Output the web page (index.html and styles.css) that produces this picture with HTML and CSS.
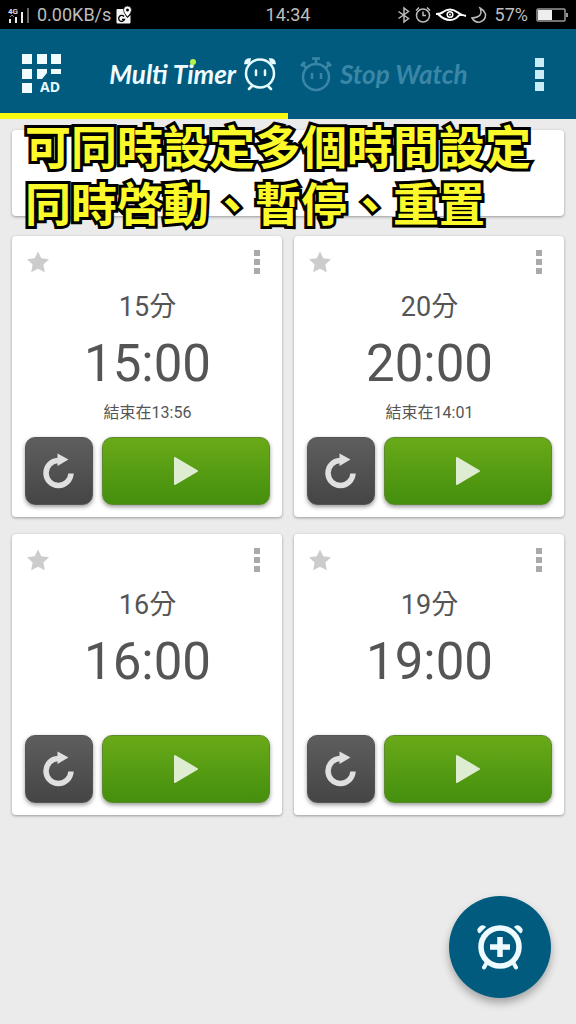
FILE: index.html
```html
<!DOCTYPE html>
<html lang="zh-Hant">
<head>
<meta charset="utf-8">
<meta name="viewport" content="width=device-width, initial-scale=1">
<title>Multi Timer</title>
<link rel="stylesheet" href="styles.css">
</head>
<body>
<svg class="defs" aria-hidden="true">
  <symbol id="star" viewBox="0 0 22 22"><path d="M11 0.500 L14.300 7.300 L22 8.200 L16.400 13.500 L17.800 21.300 L11 17.800 L4.200 21.300 L5.600 13.500 L0 8.200 L7.700 7.300 Z"/></symbol>
  <symbol id="dots" viewBox="0 0 6 24"><path d="M0 0h6v6H0zM0 9h6v6H0zM0 18h6v6H0z"/></symbol>
  <symbol id="reset" viewBox="0 0 32 36"><path d="M28 20.500 A12.500 12.500 0 1 1 15 7.500" fill="none" stroke="#e0e0e0" stroke-width="5.500"/><path d="M14.500 0.500 L25.500 6.500 L14.500 13 Z" fill="#e0e0e0"/></symbol>
  <symbol id="play" viewBox="0 0 26 30"><path d="M2 2 L24 15 L2 28 Z" fill="#deecd2" stroke="#deecd2" stroke-width="2" stroke-linejoin="round"/></symbol>
</svg>

<div class="status">
  <div class="status-side">
    <svg class="signal" viewBox="0 0 22 18" width="22" height="18"><text x="0" y="8" class="signal-text">4G</text><path d="M1 13h2v4H1zM7 11h2v6H7zM13 6h2v11h-2z" fill="#eee"/><path d="M2 11l2-2 2 2" stroke="#888" fill="none"/><path d="M19 2h2v15h-2z" fill="#666"/></svg>
    <span class="rate">0.00KB/s</span>
    <svg viewBox="0 0 16 18" width="16" height="18"><path d="M1.500 3H8q-.5 5 3.500 9l3-3v7.500q0 1-1 1h-12q-1 0-1-1V4q0-1 1-1z" fill="#f4f4f4"/><path d="M11.500 0a4 4 0 0 1 4 4q0 3-4 7-4-4-4-7a4 4 0 0 1 4-4z" fill="#fff" stroke="#000" stroke-width=".7"/><circle cx="11.500" cy="4" r="1.500"/><path d="M8 10.500a3 3 0 1 0 .5 3H6" fill="none" stroke="#000" stroke-width="1.300"/></svg>
  </div>
  <time class="clock">14:34</time>
  <div class="status-side status-right">
    <svg viewBox="0 0 14 18" width="14" height="18" class="line"><path d="M1.500 5.500l10 7L7 16V2l4.500 3.500-10 7"/></svg>
    <svg viewBox="0 0 16 18" width="16" height="18" class="line"><circle cx="8" cy="9.500" r="6.500"/><path d="M8 5.500v4h3M1 4.500l3-3M15 4.500l-3-3"/></svg>
    <svg viewBox="0 0 32 16" width="32" height="16"><path d="M1 7q5 0 7-2 7-5 14 0 4 3 9 4M3 7q6 6 12 6t10-6" fill="none" stroke="#fff" stroke-width="2"/><circle cx="15" cy="7.500" r="2.800" fill="none" stroke="#fff" stroke-width="1.500"/><circle cx="15" cy="7.500" r="1" fill="#fff"/></svg>
    <svg viewBox="0 0 16 18" width="16" height="18" class="line"><path d="M9 2q4 9-8 10 3 5 8 4 6-2 5.500-8Q13 4 9 2z"/></svg>
    <span class="percent">57%</span>
    <svg viewBox="0 0 32 14" width="32" height="14"><rect x="1" y="1" width="28" height="12" rx="1" fill="none" stroke="#999" stroke-width="1.500"/><path d="M2 2h14v10H2z" fill="#eee"/><path d="M30 5h2v4h-2z" fill="#999"/></svg>
  </div>
</div>

<header class="header">
  <div class="half active">
    <button class="plain" aria-label="AD">
      <svg viewBox="0 0 42 42" width="42" height="42"><path d="M0 1h10v10H0zM15 1h10v10H15zM29 1h10v10H29zM0 16h10v10H0zM15 16h10v4l-5 6h-5zM29 16h10v5H29zM0 30h10v10H0z" fill="#f0fbff"/><text x="18" y="39" class="ad-text">AD</text></svg>
    </button>
    <a href="#timer" class="tab tab-timer">
      <span class="logo">Multi T<span class="dot-i">i</span>mer</span>
      <svg viewBox="0 0 34 34" width="34" height="34" fill="none" stroke="#e6fbff" stroke-width="2.500" stroke-linecap="round"><circle cx="17" cy="16.500" r="14"/><path d="M13 13.500v4.500M22 13.500v4.500M9 29l-3 3M25 29l3 3"/><path d="M2.500 6q.5-3.500 4-3.500L6 4.500 4.500 6zM31.500 6q-.5-3.500-4-3.500l.5 2L29.500 6z" fill="#e6fbff"/></svg>
    </a>
  </div>
  <div class="half">
    <a href="#stopwatch" class="tab tab-watch">
      <svg viewBox="0 0 32 36" width="32" height="36" fill="none" stroke="#3b86a6" stroke-width="2.500"><circle cx="16" cy="21" r="13"/><path d="M12 17v6M21 17v6M16 8V3M12 2.500h8M6 12L2.500 7.500M26 12l3.500-4.500"/><path d="M1 10l4-4M31 10l-4-4" stroke-width="3"/></svg>
      <span class="logo">Stop Watch</span>
    </a>
    <button class="plain" aria-label="Menu"><svg viewBox="0 0 9 33" width="9" height="33"><path d="M0 0h9v9H0zM0 12h9v9H0zM0 24h9v9H0z" fill="#c9ecf7"/></svg></button>
  </div>
</header>

<main class="main">
  <section class="banner">
    <p class="caption"><span class="caption-line">可同時設定多個時間設定</span><span class="caption-line">同時啓動、暫停、重置</span></p>
  </section>
  <section class="timers">
    <article class="card">
      <div class="card-top"><button class="plain" aria-label="Favorite"><svg class="star"><use href="#star"/></svg></button><button class="plain" aria-label="Options"><svg class="dots"><use href="#dots"/></svg></button></div>
      <h2 class="name">15分</h2><p class="time">15:00</p><p class="end">結束在13:56</p>
      <div class="actions"><button class="btn reset" aria-label="Reset"><svg class="reset-icon"><use href="#reset"/></svg></button><button class="btn play" aria-label="Start"><svg class="play-icon"><use href="#play"/></svg></button></div>
    </article>
    <article class="card">
      <div class="card-top"><button class="plain" aria-label="Favorite"><svg class="star"><use href="#star"/></svg></button><button class="plain" aria-label="Options"><svg class="dots"><use href="#dots"/></svg></button></div>
      <h2 class="name">20分</h2><p class="time">20:00</p><p class="end">結束在14:01</p>
      <div class="actions"><button class="btn reset" aria-label="Reset"><svg class="reset-icon"><use href="#reset"/></svg></button><button class="btn play" aria-label="Start"><svg class="play-icon"><use href="#play"/></svg></button></div>
    </article>
    <article class="card">
      <div class="card-top"><button class="plain" aria-label="Favorite"><svg class="star"><use href="#star"/></svg></button><button class="plain" aria-label="Options"><svg class="dots"><use href="#dots"/></svg></button></div>
      <h2 class="name">16分</h2><p class="time">16:00</p><p class="end"></p>
      <div class="actions"><button class="btn reset" aria-label="Reset"><svg class="reset-icon"><use href="#reset"/></svg></button><button class="btn play" aria-label="Start"><svg class="play-icon"><use href="#play"/></svg></button></div>
    </article>
    <article class="card">
      <div class="card-top"><button class="plain" aria-label="Favorite"><svg class="star"><use href="#star"/></svg></button><button class="plain" aria-label="Options"><svg class="dots"><use href="#dots"/></svg></button></div>
      <h2 class="name">19分</h2><p class="time">19:00</p><p class="end"></p>
      <div class="actions"><button class="btn reset" aria-label="Reset"><svg class="reset-icon"><use href="#reset"/></svg></button><button class="btn play" aria-label="Start"><svg class="play-icon"><use href="#play"/></svg></button></div>
    </article>
  </section>
</main>

<button class="fab" aria-label="Add timer">
  <svg viewBox="0 0 46 46" width="46" height="46" fill="none" stroke="#effcff"><circle cx="23" cy="23" r="19" stroke-width="5.500"/><path d="M23 13v20M13 23h20" stroke-width="5.500"/><path d="M9.500 39l-2.500 4.500M36.500 39l2.500 4.500" stroke-width="4" stroke-linecap="round"/><path d="M1.500 8.500Q0 6 1.500 4q2-3 6-2l1 1-6 6zM44.500 8.500Q46 6 44.500 4q-2-3-6-2l-1 1 6 6z" fill="#effcff" stroke-width="1"/></svg>
</button>
</body>
</html>
```
FILE: styles.css
```css
* { box-sizing: border-box; }
body {
  margin: 0;
  min-height: 100vh;
  background: #ebebeb;
  color: #555;
  font-family: Roboto, "Noto Sans CJK TC", sans-serif;
}
h2, p { margin: 0; font-weight: 400; }
svg { display: block; flex: none; }
.defs { position: absolute; width: 0; height: 0; }
.plain { padding: 0; border: 0; background: none; cursor: pointer; }

.status {
  display: flex;
  align-items: center;
  height: 29px;
  padding: 0 8px;
  background: #000;
  color: #bdbdbd;
  font-size: 18px;
  line-height: 29px;
}
.status-side { display: flex; flex: 1; align-items: center; gap: 5px; }
.status-right { justify-content: flex-end; gap: 4px; }
.rate { margin-left: 2px; }
.percent { margin: 0 4px; }
.line { fill: none; stroke: #bbb; stroke-width: 1.5; }
.signal-text { fill: #ddd; font: 700 8px Roboto, sans-serif; }

.header { display: flex; height: 90px; background: #005b7f; }
.half {
  display: flex;
  width: 50%;
  align-items: center;
  justify-content: space-between;
  border-bottom: 6px solid transparent;
}
.active { padding: 6px 11px 0 22px; border-color: #f8fa10; }
.half:not(.active) { padding: 6px 32px 0 12px; }
.ad-text { fill: #e6fbff; font: 700 14px "Open Sans", sans-serif; }
.tab { display: flex; align-items: center; color: #f0fbff; text-decoration: none; }
.tab-timer { gap: 7px; }
.tab-watch { gap: 8px; color: #3b86a6; }
.logo { font: italic 700 26px/34px Lato, sans-serif; white-space: nowrap; }
.dot-i { position: relative; }
.dot-i::after {
  content: "";
  position: absolute;
  top: 1px;
  left: 3px;
  width: 6px;
  height: 6px;
  border-radius: 50%;
  background: #b6f04a;
}

.main { padding: 11px 12px; }
.banner, .card {
  border-radius: 4px;
  background: #fff;
  box-shadow: 0 1px 3px rgba(0, 0, 0, .35);
}
.banner { position: relative; height: 86px; margin-bottom: 20px; }
.caption {
  position: absolute;
  top: -14px;
  left: 13px;
  color: #fbf92a;
  font: 700 46px/57px "Noto Sans CJK TC", sans-serif;
  white-space: nowrap;
  -webkit-text-stroke: 6px #000;
  paint-order: stroke fill;
  stroke-linejoin: round;
}
.caption-line { display: block; }
.timers { display: grid; grid-template-columns: 1fr 1fr; gap: 17px 12px; }
.card {
  display: flex;
  flex-direction: column;
  padding: 13px 12px 12px 13px;
  text-align: center;
}
.card-top { display: flex; align-items: center; justify-content: space-between; height: 26px; padding: 0 10px 0 2px; }
.star { width: 22px; height: 22px; fill: #ccc; }
.dots { width: 6px; height: 24px; fill: #aaa; }
.name { margin-top: 16px; font-size: 27px; line-height: 32px; }
.time { margin-top: 9px; font-size: 51px; line-height: 64px; }
.end { height: 24px; margin: 5px 0 12px; font-size: 16px; line-height: 24px; }
.actions { display: flex; gap: 9px; }
.btn {
  display: flex;
  align-items: center;
  justify-content: center;
  height: 68px;
  padding: 0;
  border: 1px solid #555;
  border-radius: 10px;
  box-shadow: 0 2px 4px rgba(0, 0, 0, .4);
  cursor: pointer;
}
.reset { width: 68px; background: linear-gradient(#5e5e5e, #454545); }
.play { flex: 1; border-color: #5d8a2c; background: linear-gradient(#69aa18, #448f0e); }
.reset-icon { width: 32px; height: 36px; }
.play-icon { width: 26px; height: 30px; }

.fab {
  position: fixed;
  right: 25px;
  bottom: 26px;
  display: flex;
  align-items: center;
  justify-content: center;
  width: 102px;
  height: 102px;
  padding: 0;
  border: 0;
  border-radius: 50%;
  background: #005b7f;
  box-shadow: 0 5px 9px rgba(0, 0, 0, .3);
  cursor: pointer;
}
```
